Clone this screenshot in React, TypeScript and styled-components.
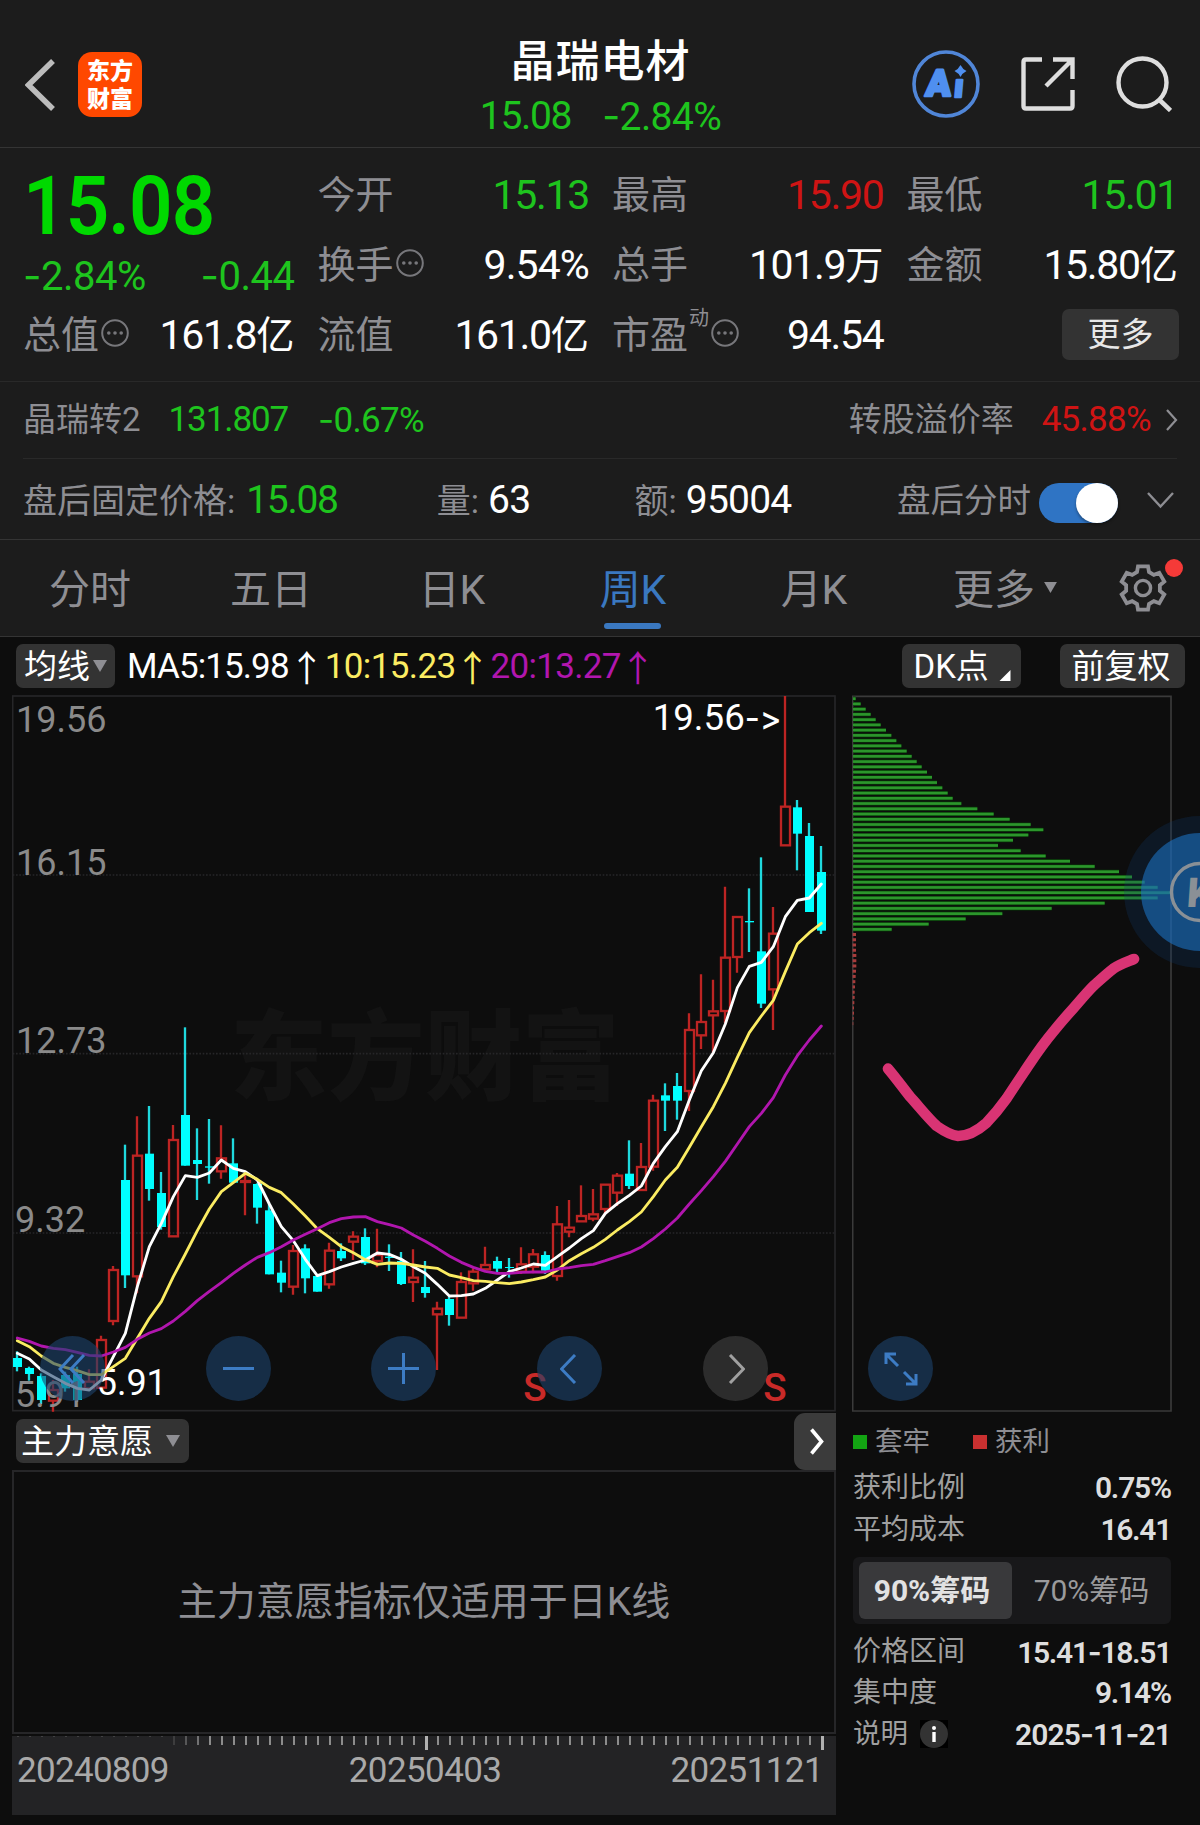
import React from "react";
import styled, { createGlobalStyle } from "styled-components";

const GREEN = "#1ec41e";
const RED = "#cf1414";
const WHITE = "#ffffff";
const GREY = "#8e8e93";

const GlobalStyle = createGlobalStyle`
  * { box-sizing: border-box; }
  body { margin: 0; background: #0d0d0d; }
`;

const Page = styled.div`
  position: relative;
  width: 1200px;
  height: 1825px;
  overflow: hidden;
  background: #0d0d0d;
  font-family: Roboto, "Noto Sans CJK SC", sans-serif;
  color: ${WHITE};
  svg { display: block; flex: none; }
`;

/* ---------- text ---------- */

const NumText = styled.span<{ $size: number; $color?: string; $weight?: number; $ls?: number }>`
  font-size: ${(p) => p.$size}px;
  font-weight: ${(p) => p.$weight ?? 400};
  color: ${(p) => p.$color ?? WHITE};
  letter-spacing: ${(p) => p.$ls ?? -0.6}px;
  line-height: 1;
  white-space: pre;
`;
const Dash = styled.span`
  font-family: Inter, sans-serif;
`;
const Han = styled.span`
  font-size: 0.93em;
  letter-spacing: 0;
`;

function Num({ children, size, color, weight, ls }: { children: string; size: number; color?: string; weight?: number; ls?: number }) {
  return (
    <NumText $size={size} $color={color} $weight={weight} $ls={ls}>
      {children.split(/(-|[\u4e00-\u9fff]+)/).map((part, i) =>
        part === "-" ? <Dash key={i}>-</Dash> : /[\u4e00-\u9fff]/.test(part) ? <Han key={i}>{part}</Han> : part
      )}
    </NumText>
  );
}

const Label = styled.span<{ $size: number; $color?: string; $weight?: number }>`
  font-size: ${(p) => p.$size}px;
  font-weight: ${(p) => p.$weight ?? 400};
  color: ${(p) => p.$color ?? GREY};
  line-height: 1;
  white-space: nowrap;
`;

/* ---------- header ---------- */

const Header = styled.header`
  display: grid;
  grid-template-columns: 1fr auto 1fr;
  height: 148px;
  padding: 0 28px 0 25px;
  background: #1c1c1c;
  border-bottom: 1px solid #343434;
`;
const HeaderSide = styled.div<{ $end?: boolean }>`
  display: flex;
  align-items: center;
  justify-content: ${(p) => (p.$end ? "flex-end" : "flex-start")};
  gap: ${(p) => (p.$end ? 41 : 23)}px;
  padding-top: ${(p) => (p.$end ? 20 : 22)}px;
`;
const AppLogo = styled.div`
  width: 64px;
  height: 65px;
  padding: 3px 8px 0 9px;
  border-radius: 14px;
  background: #ff4800;
  font: 900 23px/28px "Noto Sans CJK SC", sans-serif;
  color: #fff;
  word-break: break-all;
`;
const TitleBlock = styled.div`
  display: flex;
  flex-direction: column;
  align-items: center;
  padding: 30px 0 0 4px;
`;
const Title = styled.h1`
  margin: 0;
  font: 500 44px/56px "Noto Sans CJK SC", sans-serif;
  letter-spacing: 1px;
`;
const TitleQuote = styled.div`
  display: flex;
  align-items: center;
  gap: 31px;
  height: 60px;
`;

/* ---------- quote ---------- */

const Quote = styled.section`
  display: grid;
  grid-template-columns: repeat(4, 1fr);
  column-gap: 23px;
  height: 234px;
  padding: 0 22px 0 23px;
  background: #1c1c1c;
  border-bottom: 1px solid #292929;
`;
const QuoteCol = styled.div<{ $first?: boolean }>`
  display: flex;
  flex-direction: column;
  padding-top: ${(p) => (p.$first ? 15 : 12)}px;
`;
const QuoteRow = styled.div<{ $h?: number }>`
  display: flex;
  align-items: center;
  justify-content: space-between;
  height: ${(p) => p.$h ?? 70}px;
`;
const LabelGroup = styled.div`
  display: flex;
  align-items: center;
  gap: 2px;
`;
const BigPrice = styled.div`
  height: 87px;
  font: 600 82px/87px Roboto, sans-serif;
  color: #00d900;
  transform: scaleX(0.93);
  transform-origin: left;
  letter-spacing: -1px;
`;
const Sup = styled.sup`
  align-self: flex-start;
  margin: -10px 0 0 -1px;
  font-size: 20px;
  line-height: 24px;
  color: ${GREY};
`;
const MoreButton = styled.button`
  margin: -2px -1px 0 auto;
  width: 117px;
  height: 51px;
  padding: 0 0 4px;
  border: 0;
  border-radius: 7px;
  background: #333333;
  color: #e8e8e8;
  font: 400 33px/45px "Noto Sans CJK SC", sans-serif;
`;

/* ---------- bond and after-hours ---------- */

const BondRow = styled.section`
  display: flex;
  align-items: center;
  height: 77px;
  margin: 0;
  padding: 0 22px 2px 23px;
  background: linear-gradient(#292929, #292929) 23px 100% / 1154px 1px no-repeat #1c1c1c;
`;
const AfterRow = styled.section`
  display: flex;
  align-items: center;
  height: 81px;
  padding: 3px 26px 0 23px;
  background: #1c1c1c;
  border-bottom: 1px solid #343434;
`;
const Space = styled.div<{ $w?: number }>`
  flex: ${(p) => (p.$w ? `0 0 ${p.$w}px` : "1")};
`;
const Toggle = styled.div`
  display: flex;
  justify-content: flex-end;
  width: 79px;
  height: 40px;
  margin: 4px 29px 0 8px;
  border-radius: 20px;
  background: #2f74c4;
`;
const Knob = styled.div`
  width: 42px;
  height: 40px;
  border-radius: 50%;
  background: #fff;
  box-shadow: 0 2px 3px rgba(0, 0, 0, 0.35);
`;

/* ---------- tabs ---------- */

const Tabs = styled.nav`
  display: flex;
  height: 97px;
  background: #1c1c1c;
  border-bottom: 1px solid #343434;
`;
const Tab = styled.div<{ $active?: boolean; $w?: number }>`
  position: relative;
  display: flex;
  align-items: center;
  justify-content: center;
  gap: 9px;
  width: ${(p) => p.$w ?? 181}px;
  height: 96px;
  padding: 3px 1px 0 0;
  font-size: 41px;
  line-height: 48px;
  color: ${(p) => (p.$active ? "#3a78c0" : GREY)};
  svg { margin-top: -4px; }
  &::after {
    content: "";
    display: ${(p) => (p.$active ? "block" : "none")};
    position: absolute;
    bottom: 7px;
    left: 50%;
    width: 57px;
    height: 6px;
    margin-left: -30px;
    border-radius: 3px;
    background: #3a78c0;
  }
`;
const GearTab = styled.div`
  position: relative;
  display: flex;
  align-items: center;
  margin-left: 13px;
`;
const RedDot = styled.div`
  position: absolute;
  top: 19px;
  right: -16px;
  width: 18px;
  height: 18px;
  border-radius: 50%;
  background: #f53a38;
`;

/* ---------- toolbar ---------- */

const Toolbar = styled.div`
  display: flex;
  align-items: center;
  height: 58px;
  padding: 0 15px 0 16px;
`;
const Pill = styled.div<{ $w: number; $pad: number }>`
  display: flex;
  align-items: center;
  width: ${(p) => p.$w}px;
  height: 44px;
  padding-left: ${(p) => p.$pad}px;
  border-radius: 7px;
  background: #333333;
  font-size: 33px;
  line-height: 45px;
  white-space: nowrap;
`;
const Arrow = styled.span<{ $color: string }>`
  width: 34px;
  font: 400 36px/40px "Noto Sans CJK SC", sans-serif;
  color: ${(p) => p.$color};
  text-indent: -2px;
`;

/* ---------- body ---------- */

const Body = styled.main`
  display: flex;
  gap: 16px;
  padding-left: 12px;
`;
const ChartCol = styled.div`
  width: 824px;
`;
const ChartBox = styled.div`
  position: relative;
  height: 717px;
`;
const ControlBar = styled.div`
  position: absolute;
  left: 28px;
  bottom: 11px;
  display: flex;
  gap: 100.7px;
`;
const Control = styled.div<{ $muted?: boolean }>`
  display: flex;
  align-items: center;
  justify-content: center;
  width: 65px;
  height: 65px;
  border-radius: 50%;
  background: ${(p) => (p.$muted ? "rgba(58,58,58,0.7)" : "rgba(29,66,108,0.6)")};
`;
const IndicatorBar = styled.div`
  display: flex;
  align-items: center;
  justify-content: space-between;
  height: 58px;
  padding-left: 4px;
`;
const NextButton = styled.div`
  display: flex;
  align-items: center;
  justify-content: center;
  width: 42px;
  height: 57px;
  padding-left: 4px;
  border-radius: 11px 0 0 11px;
  background: #3b3b3b;
`;
const IndicatorPanel = styled.div`
  display: flex;
  align-items: center;
  justify-content: center;
  height: 264px;
  border: 2px solid #262628;
`;
const TimeBar = styled.div`
  height: 79px;
  margin-top: 2px;
  background: #232325;
`;
const Dates = styled.div`
  display: flex;
  justify-content: space-between;
  padding: 2px 13px 0 5px;
  span:nth-child(2) { margin-left: 11px; }
`;

/* ---------- chip panel ---------- */

const ChipCol = styled.aside`
  width: 320px;
`;
const Legend = styled.div`
  display: flex;
  align-items: center;
  height: 55px;
  padding: 5px 0 0 1px;
`;
const Swatch = styled.i<{ $color: string }>`
  width: 14px;
  height: 14px;
  margin-right: 8px;
  background: ${(p) => p.$color};
`;
const InfoRow = styled.div<{ $h?: number }>`
  display: flex;
  align-items: center;
  justify-content: space-between;
  height: ${(p) => p.$h ?? 42}px;
  padding: 0 1px 1px 1px;
`;
const Segment = styled.div`
  display: flex;
  height: 67px;
  width: 318px;
  margin: 6px 0 8px 1px;
  padding: 5px 6px;
  border-radius: 6px;
  background: #18181a;
`;
const SegmentItem = styled.div<{ $active?: boolean }>`
  display: flex;
  align-items: center;
  justify-content: center;
  width: 153px;
  padding: ${(p) => (p.$active ? "0 7px 5px 0" : "0 0 5px 6px")};
  border-radius: 6px;
  font-size: 30px;
  font-weight: ${(p) => (p.$active ? 700 : 400)};
  color: ${(p) => (p.$active ? "#e2e2e2" : "#9a9a9c")};
  background: ${(p) => (p.$active ? "#39393b" : "transparent")};
`;
const InfoBadge = styled.span`
  display: flex;
  width: 28px;
  height: 28px;
  margin-left: 10px;
  background: #000;
`;
const FloatingK = styled.div`
  position: absolute;
  left: 1124px;
  top: 816px;
`;

/* ---------- icons ---------- */

const Dots = () => (
  <svg width="28" height="32" viewBox="0 0 28 32">
    <circle cx="14" cy="14" r="12.8" fill="none" stroke="#77777b" strokeWidth="2" />
    {[7.8, 14, 20.2].map((x) => (
      <circle key={x} cx={x} cy="14" r="1.8" fill="#77777b" />
    ))}
  </svg>
);
const Down = ({ w = 14, h = 12 }: { w?: number; h?: number }) => (
  <svg width={w} height={h} viewBox="0 0 14 12">
    <path d="M0 0H14L7 12Z" fill={GREY} />
  </svg>
);
const gearPoints = Array.from({ length: 6 }, (_, k) => {
  const a = (k * Math.PI) / 3;
  return [[-6, -16], [-5, -21.7], [5, -21.7], [6, -16]]
    .map(([x, y]) => `${(x * Math.cos(a) - y * Math.sin(a)).toFixed(2)},${(x * Math.sin(a) + y * Math.cos(a)).toFixed(2)}`)
    .join(" ");
}).join(" ");

/* ---------- chart data: values in thirds of a pixel ---------- */

type Candle = ["c" | "r", number, number, number, number];
const candles: Candle[] = [
  ["c", 1054, 1074, 1101, 1114], ["c", 1100, 1104, 1122, 1142], ["c", 1120, 1128, 1200, 1212], ["r", 1140, 1170, 1202, 1235],
  ["c", 1115, 1125, 1165, 1175], ["c", 1100, 1122, 1200, 1205], ["r", 1108, 1145, 1165, 1168], ["r", 1007, 1020, 1163, 1168],
  ["r", 798, 810, 963, 976], ["c", 434, 540, 826, 864], ["r", 349, 467, 829, 880], ["c", 318, 461, 567, 602],
  ["c", 516, 579, 681, 689], ["r", 375, 420, 709, 709], ["c", 82, 345, 497, 497], ["c", 385, 480, 492, 600],
  ["c", 357, 499, 503, 551], ["r", 376, 475, 514, 536], ["c", 415, 490, 548, 548], ["r", 520, 543, 546, 646],
  ["c", 550, 552, 623, 671], ["c", 610, 631, 823, 823], ["c", 782, 818, 848, 877], ["r", 735, 753, 860, 884],
  ["c", 733, 745, 835, 880], ["c", 825, 828, 875, 875], ["r", 728, 752, 853, 866], ["c", 730, 753, 775, 783],
  ["r", 694, 710, 725, 780], ["c", 685, 711, 790, 795], ["r", 686, 765, 783, 802], ["c", 733, 770, 774, 813],
  ["c", 756, 783, 852, 855], ["r", 748, 833, 846, 906], ["c", 783, 861, 879, 893], ["r", 905, 926, 943, 1110],
  ["c", 890, 897, 945, 977], ["r", 817, 846, 953, 953], ["r", 805, 815, 850, 872], ["r", 740, 795, 808, 815],
  ["c", 770, 783, 806, 818], ["c", 774, 801, 804, 833], ["r", 742, 793, 815, 822], ["r", 747, 763, 800, 820],
  ["c", 754, 765, 812, 822], ["r", 618, 673, 828, 842], ["r", 600, 683, 695, 712], ["r", 556, 648, 664, 664],
  ["r", 567, 643, 656, 664], ["r", 554, 554, 627, 645], ["r", 519, 527, 578, 618], ["c", 421, 521, 558, 567],
  ["r", 429, 501, 570, 570], ["r", 284, 302, 500, 512], ["c", 250, 286, 302, 393], ["c", 219, 258, 302, 359],
  ["r", 40, 90, 273, 333], ["r", -77, 66, 106, 147], ["r", -61, 34, 46, 158], ["r", -340, -127, 33, 70],
  ["r", -250, -249, -129, -82], ["c", -335, -237, -233, -144], ["c", -428, -146, 11, 24], ["r", -279, -199, -32, 90],
  ["r", -912, -580, -464, -464], ["c", -600, -578, -499, -389], ["c", -531, -492, -264, -264], ["c", -462, -384, -208, -198],
];
const ma5 = [
  1060, 1077, 1110, 1130, 1150, 1165, 1170, 1140, 1070, 1000, 860, 740, 670, 590, 527, 532, 519, 480, 505, 515, 540, 612, 680, 722, 778,
  827, 815, 801, 790, 780, 759, 763, 778, 800, 820, 853, 888, 887, 882, 865, 840, 815, 804, 792, 796, 770, 744, 716, 692, 640, 611, 586,
  558, 490, 440, 395, 300, 212, 158, 72, -37, -101, -113, -160, -250, -299, -306, -348,
];
const ma10 = [
  1022, 1040, 1068, 1090, 1102, 1112, 1124, 1124, 1100, 1075, 1015, 955, 905, 830, 762, 692, 627, 575, 548, 520, 538, 562, 578, 612, 648,
  686, 712, 740, 758, 779, 793, 789, 790, 795, 801, 805, 825, 833, 842, 844, 848, 851, 846, 839, 831, 810, 782, 761, 742, 718, 690, 665,
  636, 590, 540, 502, 442, 380, 320, 250, 172, 98, 48, 1, -85, -168, -202, -230,
];
const ma20 = [
  1014, 1024, 1038, 1045, 1049, 1057, 1066, 1068, 1056, 1042, 1018, 999, 986, 963, 934, 902, 874, 848, 820, 795, 772, 758, 740, 720, 703,
  686, 668, 656, 651, 650, 665, 674, 684, 705, 724, 745, 768, 787, 802, 814, 820, 820, 817, 816, 816, 807, 803, 797, 793, 782, 770, 758,
  741, 716, 687, 654, 612, 572, 530, 484, 432, 380, 340, 293, 225, 167, 120, 78,
];
const xAt = (i: number) => 52 + 36 * i;
const line = (ys: number[]) => ys.map((y, i) => `${xAt(i)},${y}`).join(" ");

const chips = [
  47, 62, 77, 92, 107, 122, 138, 154, 169, 184, 200, 215, 230, 245, 261, 276, 291, 307, 323, 338, 364, 412, 461, 509, 572, 610, 565, 519,
  474, 542, 617, 690, 764, 837, 876, 914, 953, 992, 953, 794, 635, 487, 377, 266, 155,
];
const profit = [10, 10, 10, 10, 11, 11, 11, 10, 9, 8, 7, 6, 6, 5, 4, 4, 3, 2];

const NoLigature = styled.tspan`
  font-family: Inter, sans-serif;
  font-feature-settings: "calt" 0, "liga" 0;
`;

const KLine = () => (
  <svg width="824" height="717" viewBox="36 -915 2472 2151">
    <text x="690" y="275" fontFamily="Noto Sans CJK SC" fontWeight="900" fontSize="292" fill="#131313">东方财富</text>
    <rect x="38" y="-912" width="2467" height="2144" fill="none" stroke="#262628" strokeWidth="5" />
    {[-375, 161, 699].map((y) => (
      <line key={y} x1="38" x2="2505" y1={y} y2={y} stroke="#262628" strokeWidth="5" strokeDasharray="5 5" />
    ))}
    {candles.map(([kind, high, top, bottom, low], i) => {
      const x = xAt(i);
      if (kind === "c") {
        return (
          <g key={i}>
            <line x1={x - 1} x2={x - 1} y1={high} y2={low} stroke="#1fd9de" strokeWidth="7" />
            <rect x={x - 13} y={top} width="27" height={bottom - top} fill="#00ffff" />
          </g>
        );
      }
      return (
        <g key={i} stroke="#bd2423" strokeWidth="7" fill="none">
          <path d={`M${x - 1} ${high}V${top}M${x - 1} ${bottom}V${low}`} />
          <rect x={x - 13} y={top} width="27" height={bottom - top} />
        </g>
      );
    })}
    <g fontFamily="Roboto" fontSize="108" fill="#8a8a8a">
      <text x="48" y="-804">19.56</text>
      <text x="48" y="-376">16.15</text>
      <text x="48" y="160">12.73</text>
      <text x="45" y="697">9.32</text>
      <text x="45" y="1221">5.91</text>
    </g>
    <text x="1958" y="-811" fontFamily="Roboto" fontSize="110" fill="#fff">
      19.56<NoLigature fontSize="98" fontWeight="500">-&gt;</NoLigature>
    </text>
    <text x="290" y="1184" fontFamily="Roboto" fontSize="108" fill="#fff">5.91</text>
    <g fontFamily="Roboto" fontSize="116" fontWeight="500" fill="#c92a28">
      <text x="1570" y="1202">S</text>
      <text x="2290" y="1202">S</text>
    </g>
    <g fill="none" strokeWidth="8.5" strokeLinejoin="round" strokeLinecap="round">
      <polyline points={line(ma5)} stroke="#ffffff" />
      <polyline points={line(ma10)} stroke="#fbec62" />
      <polyline points={line(ma20)} stroke="#b116ae" />
    </g>
  </svg>
);

const Chips = () => (
  <svg width="320" height="717" viewBox="36 45 960 2151">
    <path d="M38 2193V49H993V2193Z" fill="none" stroke="#3a3a3a" strokeWidth="5" />
    {chips.map((end, i) => (
      <g key={i}>
        <rect x="39" y={50 + i * 15.73} width={end - 39} height="12" fill="#073a07" />
        <rect x="39" y={52 + i * 15.73} width={end - 39} height="8" fill="#2c962c" />
      </g>
    ))}
    {profit.map((w, i) => (
      <rect key={i} x="38" y={759 + i * 15.73} width={w} height="9" fill="#a83c3c" />
    ))}
    <path
      d="M144 1166C165 1190 190 1225 210 1250C235 1277 262 1312 290 1338C310 1352 332 1366 354 1368C385 1368 415 1350 440 1328C462 1305 482 1280 500 1255C528 1212 550 1180 570 1150C592 1117 615 1085 640 1055C660 1030 680 1007 700 985C720 962 740 938 760 918C780 900 800 881 820 866C840 852 862 845 882 837"
      fill="none" stroke="#d93474" strokeWidth="32" strokeLinecap="round"
    />
  </svg>
);

const stroke = { fill: "none", stroke: "#3d7cc4", strokeWidth: 3 } as const;

const stats = [
  [
    { label: "今开", value: "15.13", color: GREEN },
    { label: "换手", dots: true, value: "9.54%" },
    { label: "流值", value: "161.0亿" },
  ],
  [
    { label: "最高", value: "15.90", color: RED },
    { label: "总手", value: "101.9万" },
    { label: "市盈", sup: "动", dots: true, value: "94.54" },
  ],
  [
    { label: "最低", value: "15.01", color: GREEN },
    { label: "金额", value: "15.80亿" },
  ],
] as { label: string; value: string; color?: string; dots?: boolean; sup?: string }[][];

export default function App() {
  return (
    <Page>
      <GlobalStyle />
      <Header>
        <HeaderSide>
          <svg width="30" height="52" viewBox="0 0 30 52">
            <path d="M28 2L3.5 26L28 50" fill="none" stroke="#bcbcbc" strokeWidth="5.5" />
          </svg>
          <AppLogo>东方财富</AppLogo>
        </HeaderSide>
        <TitleBlock>
          <Title>晶瑞电材</Title>
          <TitleQuote>
            <Num size={39} color={GREEN} ls={-1.3}>15.08</Num>
            <Num size={39} color={GREEN} ls={-0.6}>-2.84%</Num>
          </TitleQuote>
        </TitleBlock>
        <HeaderSide $end>
          <svg width="68" height="68" viewBox="0 0 68 68">
            <circle cx="34" cy="34" r="32" fill="none" stroke="#5086d8" strokeWidth="3.6" />
            <g fill="#4f8ff0" stroke="#4f8ff0" strokeWidth="2.6" strokeLinejoin="round" fontFamily="Roboto" fontWeight="900" fontSize="37">
              <text transform="translate(13 46) skewX(-5)">A</text>
              <text transform="translate(41.5 47) skewX(-5)" fontSize="32">ı</text>
            </g>
            <path d="M48.5 15Q50.5 19 54.5 21Q50.5 23 48.5 27Q46.5 23 42.5 21Q46.5 19 48.5 15Z" fill="#4f8ff0" />
          </svg>
          <svg width="54" height="54" viewBox="0 0 54 54">
            <path d="M21 2.5H5Q2.5 2.5 2.5 5V49Q2.5 51.5 5 51.5H49Q51.5 51.5 51.5 49V33M32 2.5H51.5V22M51 3L25 29" fill="none" stroke="#dedede" strokeWidth="4.4" />
          </svg>
          <svg width="56" height="56" viewBox="0 0 56 56">
            <circle cx="26.5" cy="26.5" r="24" fill="none" stroke="#dedede" strokeWidth="4.4" />
            <path d="M42.5 43L54.5 54.5" stroke="#dedede" strokeWidth="4.6" />
          </svg>
        </HeaderSide>
      </Header>

      <Quote>
        <QuoteCol $first>
          <BigPrice>15.08</BigPrice>
          <QuoteRow $h={52}>
            <Num size={40} color={GREEN} ls={-0.5}>-2.84%</Num>
            <Num size={40} color={GREEN} ls={-0.5}>-0.44</Num>
          </QuoteRow>
          <QuoteRow $h={66}>
            <LabelGroup>
              <Label $size={38}>总值</Label>
              <Dots />
            </LabelGroup>
            <Num size={41} ls={-1.2}>161.8亿</Num>
          </QuoteRow>
        </QuoteCol>
        {stats.map((col, c) => (
          <QuoteCol key={c}>
            {col.map((s) => (
              <QuoteRow key={s.label}>
                <LabelGroup>
                  <Label $size={38}>{s.label}</Label>
                  {s.sup && <Sup>{s.sup}</Sup>}
                  {s.dots && <Dots />}
                </LabelGroup>
                <Num size={41} color={s.color} ls={s.value.includes("%") ? -0.9 : -1.3}>{s.value}</Num>
              </QuoteRow>
            ))}
            {c === 2 && (
              <QuoteRow>
                <MoreButton>更多</MoreButton>
              </QuoteRow>
            )}
          </QuoteCol>
        ))}
      </Quote>

      <BondRow>
        <Label $size={33}>晶瑞转2</Label>
        <Space $w={28} />
        <Num size={35} color={GREEN} ls={-1.1}>131.807</Num>
        <Space $w={30} />
        <Num size={35} color={GREEN} ls={-0.7}>-0.67%</Num>
        <Space />
        <Label $size={33}>转股溢价率</Label>
        <Space $w={28} />
        <Num size={35} color={RED} ls={-0.7}>45.88%</Num>
        <Space $w={15} />
        <svg width="12" height="22" viewBox="0 0 12 22">
          <path d="M1 1L10 11L1 21" fill="none" stroke={GREY} strokeWidth="2.2" />
        </svg>
      </BondRow>

      <AfterRow>
        <Label $size={34}>盘后固定价格:</Label>
        <Space $w={11} />
        <Num size={39} color={GREEN} ls={-1.3}>15.08</Num>
        <Space $w={99} />
        <Label $size={34}>量:</Label>
        <Space $w={9} />
        <Num size={39}>63</Num>
        <Space $w={104} />
        <Label $size={34}>额:</Label>
        <Space $w={9} />
        <Num size={39} ls={-0.8}>95004</Num>
        <Space />
        <Label $size={33.5}>盘后分时</Label>
        <Toggle>
          <Knob />
        </Toggle>
        <svg width="27" height="17" viewBox="0 0 27 17">
          <path d="M1 1L13.5 14.5L26 1" fill="none" stroke={GREY} strokeWidth="2.4" />
        </svg>
      </AfterRow>

      <Tabs>
        <Tab>分时</Tab>
        <Tab>五日</Tab>
        <Tab>日K</Tab>
        <Tab $active>周K</Tab>
        <Tab>月K</Tab>
        <Tab $w={201}>
          更多
          <Down w={13} h={11} />
        </Tab>
        <GearTab>
          <svg width="48" height="48" viewBox="-24 -24 48 48">
            <polygon points={gearPoints} fill="none" stroke={GREY} strokeWidth="3.8" />
            <circle r="7.6" fill="none" stroke={GREY} strokeWidth="3.4" />
          </svg>
          <RedDot />
        </GearTab>
      </Tabs>

      <Toolbar>
        <Pill $w={99} $pad={8}>
          均线
          <Space $w={3} />
          <Down />
        </Pill>
        <Space $w={12} />
        <Num size={35} ls={-0.9}>MA5:15.98</Num>
        <Space $w={2} />
        <Arrow $color={WHITE}>↑</Arrow>
        <Num size={35} color="#fbec62" ls={-0.6}>10:15.23</Num>
        <Space $w={1} />
        <Arrow $color="#fbec62">↑</Arrow>
        <Num size={35} color="#b116ae" ls={-0.7}>20:13.27</Num>
        <Space $w={1} />
        <Arrow $color="#b116ae">↑</Arrow>
        <Space />
        <Pill $w={119} $pad={12}>
          DK点
          <svg width="22" height="44" viewBox="0 0 22 44">
            <path d="M21.5 26V37H10.5Z" fill="#fff" />
          </svg>
        </Pill>
        <Space $w={39} />
        <Pill $w={125.5} $pad={12}>前复权</Pill>
      </Toolbar>

      <Body>
        <ChartCol>
          <ChartBox>
            <KLine />
            <ControlBar>
              <Control>
                <svg width="30" height="32" viewBox="0 0 30 32">
                  <path d="M15 2L2 16L15 30M26 2L13 16L26 30" {...stroke} />
                </svg>
              </Control>
              <Control>
                <svg width="31" height="31" viewBox="0 0 31 31">
                  <path d="M0 15.5H31" {...stroke} />
                </svg>
              </Control>
              <Control>
                <svg width="31" height="31" viewBox="0 0 31 31">
                  <path d="M0 15.5H31M15.5 0V31" {...stroke} />
                </svg>
              </Control>
              <Control>
                <svg width="20" height="30" viewBox="0 0 20 30">
                  <path d="M15 1L1.5 15L15 29" {...stroke} />
                </svg>
              </Control>
              <Control $muted>
                <svg width="20" height="30" viewBox="0 0 20 30">
                  <path d="M5 1L18.5 15L5 29" {...stroke} stroke="#a0a0a0" />
                </svg>
              </Control>
              <Control>
                <svg width="34" height="34" viewBox="0 0 34 34">
                  <path d="M2 12V2H12M2 2L14 14M32 22V32H22M32 32L20 20" {...stroke} />
                </svg>
              </Control>
            </ControlBar>
          </ChartBox>
          <IndicatorBar>
            <Pill $w={173} $pad={5}>
              主力意愿
              <Space $w={13} />
              <Down w={14} h={12} />
            </Pill>
            <NextButton>
              <svg width="16" height="27" viewBox="0 0 16 27">
                <path d="M2.5 1.5L12.5 13.5L2.5 25.5" fill="none" stroke="#fff" strokeWidth="3.6" />
              </svg>
            </NextButton>
          </IndicatorBar>
          <IndicatorPanel>
            <Label $size={39}>主力意愿指标仅适用于日K线</Label>
          </IndicatorPanel>
          <TimeBar>
            <svg width="824" height="15" viewBox="12 0 824 15">
              {candles.map((_, i) => {
                const x = 18 + i * 12;
                const major = i === 34 || i === 67;
                const faded = i < 13;
                return (
                  <rect
                    key={i} x={x - 1} y="0" width={major ? 3 : 2} height={faded ? 1 : major ? 14 : 9}
                    fill={major ? "#b0b0b0" : "#8c8c8c"} opacity={faded ? 0.3 : Math.min(1, 0.25 + (i - 13) * 0.25)}
                  />
                );
              })}
            </svg>
            <Dates>
              <Num size={35} color="#a9a9a9" ls={-0.7}>20240809</Num>
              <Num size={35} color="#a9a9a9">20250403</Num>
              <Num size={35} color="#a9a9a9">20251121</Num>
            </Dates>
          </TimeBar>
        </ChartCol>

        <ChipCol>
          <Chips />
          <Legend>
            <Swatch $color="#13a413" />
            <Label $size={27.5}>套牢</Label>
            <Space $w={43} />
            <Swatch $color="#c93030" />
            <Label $size={27.5}>获利</Label>
          </Legend>
          <InfoRow>
            <Label $size={28} $color="#a0a0a0">获利比例</Label>
            <Num size={30} weight={600} color="#dedede" ls={-1.2}>0.75%</Num>
          </InfoRow>
          <InfoRow>
            <Label $size={28} $color="#a0a0a0">平均成本</Label>
            <Num size={30} weight={600} color="#dedede" ls={-1.3}>16.41</Num>
          </InfoRow>
          <Segment>
            <SegmentItem $active>90%筹码</SegmentItem>
            <SegmentItem>70%筹码</SegmentItem>
          </Segment>
          <InfoRow $h={41}>
            <Label $size={28} $color="#a0a0a0">价格区间</Label>
            <Num size={30} weight={600} color="#dedede" ls={-1.3}>15.41-18.51</Num>
          </InfoRow>
          <InfoRow $h={41}>
            <Label $size={28} $color="#a0a0a0">集中度</Label>
            <Num size={30} weight={600} color="#dedede" ls={-1.2}>9.14%</Num>
          </InfoRow>
          <InfoRow $h={41}>
            <LabelGroup>
              <Label $size={27.5} $color="#a0a0a0">说明</Label>
              <InfoBadge>
                <svg width="28" height="28" viewBox="0 0 28 28">
                  <circle cx="14" cy="14" r="14" fill="#333" />
                  <circle cx="14" cy="8" r="2" fill="#fff" />
                  <path d="M14 12V22" stroke="#fff" strokeWidth="3.4" />
                </svg>
              </InfoBadge>
            </LabelGroup>
            <Num size={30} weight={600} color="#dedede" ls={-0.9}>2025-11-21</Num>
          </InfoRow>
        </ChipCol>
      </Body>

      <FloatingK>
        <svg width="76" height="152" viewBox="0 0 76 152">
          <circle cx="76" cy="76" r="76" fill="rgba(16,60,110,0.25)" />
          <circle cx="76" cy="76" r="59" fill="rgba(28,115,198,0.58)" />
          <circle cx="76" cy="76" r="28.5" fill="none" stroke="#8a9096" strokeWidth="3.4" />
          <text transform="translate(62 91) skewX(-4)" fontFamily="Roboto" fontWeight="900" fontSize="41" fill="#8a9096">K</text>
        </svg>
      </FloatingK>
    </Page>
  );
}
